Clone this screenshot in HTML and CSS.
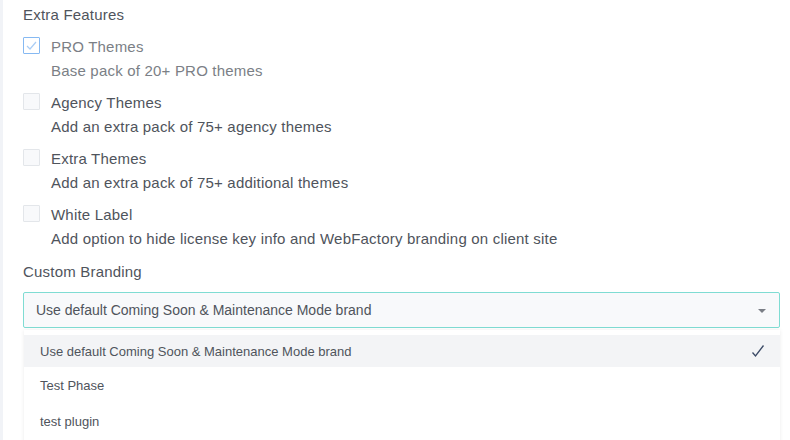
FILE: index.html
```html
<!DOCTYPE html>
<html>
<head>
<meta charset="utf-8">
<link rel="stylesheet" href="styles.css">
</head>
<body>
<div class="page">
  <div class="strip"></div>
  <div class="content">
    <div class="section-title">Extra Features</div>
    <div class="features">
      <div class="feature disabled">
        <span class="box checked">
          <svg width="11" height="9" viewBox="0 0 11 9"><path d="M1 5 L4 8 L10 1" fill="none" stroke="#aacdf5" stroke-width="1.2"/></svg>
        </span>
        <div class="ftext">
          <div class="fname">PRO Themes</div>
          <div class="fdesc">Base pack of 20+ PRO themes</div>
        </div>
      </div>
      <div class="feature">
        <span class="box"></span>
        <div class="ftext">
          <div class="fname">Agency Themes</div>
          <div class="fdesc">Add an extra pack of 75+ agency themes</div>
        </div>
      </div>
      <div class="feature">
        <span class="box"></span>
        <div class="ftext">
          <div class="fname">Extra Themes</div>
          <div class="fdesc">Add an extra pack of 75+ additional themes</div>
        </div>
      </div>
      <div class="feature">
        <span class="box"></span>
        <div class="ftext">
          <div class="fname">White Label</div>
          <div class="fdesc">Add option to hide license key info and WebFactory branding on client site</div>
        </div>
      </div>
    </div>
    <div class="section-title branding">Custom Branding</div>
    <div class="select-wrap">
      <div class="select">
        <span>Use default Coming Soon &amp; Maintenance Mode brand</span>
        <span class="caret"></span>
      </div>
      <div class="menu">
        <div class="option selected">
          <span>Use default Coming Soon &amp; Maintenance Mode brand</span>
          <svg class="tick" width="14" height="14" viewBox="0 0 14 14"><path d="M1.5 8.5 L4.5 12 L12.5 1.5" fill="none" stroke="#3b4a66" stroke-width="1.3"/></svg>
        </div>
        <div class="option">Test Phase</div>
        <div class="option">test plugin</div>
      </div>
    </div>
  </div>
</div>
</body>
</html>
```
FILE: styles.css
```css
html, body {
  margin: 0;
  padding: 0;
  background: #fff;
}
body {
  font-family: "Liberation Sans", Arial, sans-serif;
  color: #4f545c;
  width: 790px;
  height: 440px;
  overflow: hidden;
}
.page {
  display: flex;
  height: 440px;
}
.strip {
  width: 3px;
  background: #f1f3f7;
  flex: none;
}
.content {
  flex: 1;
  padding: 6px 10px 0 20px;
}
.section-title {
  font-size: 15px;
  line-height: 18px;
  letter-spacing: 0.2px;
}
.features {
  display: flex;
  flex-direction: column;
  gap: 8px;
  margin-top: 11px;
}
.feature {
  display: flex;
  gap: 11px;
}
.box {
  width: 15px;
  height: 15px;
  border: 1px solid #e3e6ea;
  background: #f8f9fb;
  border-radius: 1px;
  display: flex;
  align-items: center;
  justify-content: center;
  flex: none;
  margin-top: 2px;
}
.box.checked {
  border-color: #86b9f2;
  background: #fff;
}
.fname, .fdesc {
  font-size: 15px;
  line-height: 24px;
  letter-spacing: 0.2px;
}
.disabled .fname, .disabled .fdesc {
  color: #7b7f86;
}
.branding {
  margin-top: 12px;
}
.select-wrap {
  margin-top: 11px;
}
.select {
  height: 34px;
  border: 1px solid #7fdcd3;
  background: #f8f9fb;
  border-radius: 2px;
  display: flex;
  align-items: center;
  justify-content: space-between;
  padding: 0 13px 0 12px;
  font-size: 14px;
}
.caret {
  width: 0;
  height: 0;
  border-left: 4px solid transparent;
  border-right: 4px solid transparent;
  border-top: 4px solid #7a7e86;
  margin-top: 2px;
}
.menu {
  margin: 2px 0 0 1px;
  padding: 5px 0 20px;
  background: #fff;
  box-shadow: 0 0 4px rgba(0,0,0,0.08);
}
.option {
  height: 36px;
  display: flex;
  align-items: center;
  justify-content: space-between;
  padding: 0 15px 0 16px;
  font-size: 13px;
}
.option.selected {
  background: #f3f4f6;
  height: 32px;
}
```
